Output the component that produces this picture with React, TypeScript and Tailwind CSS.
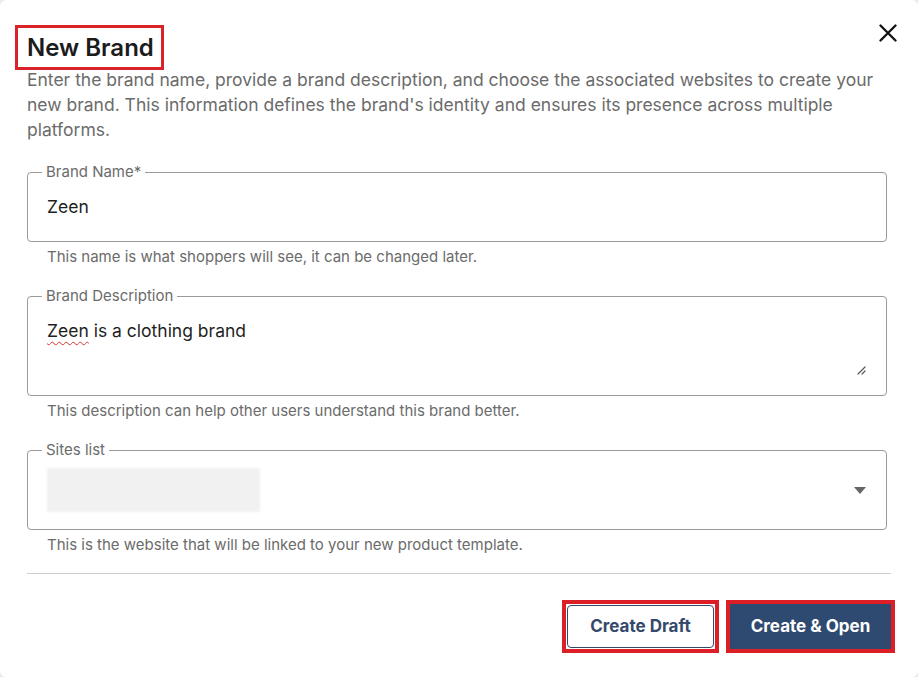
import { type ReactNode } from 'react';

const font = { fontFamily: 'Inter, "Noto Sans", Arial, sans-serif' };

function OutlinedField({ label, children, helper }: { label: string; children: ReactNode; helper: string }) {
  return (
    <div>
      <div className="relative rounded-[4px] border border-[#9a9a9a]">
        <span className="absolute left-[14px] top-[-10px] bg-white px-[4px] text-[15px] leading-[18px] text-[#6b6b6b]">
          {label}
        </span>
        {children}
      </div>
      <p className="mt-[5px] pl-[20px] text-[15px] leading-[20px] text-[#6b6b6b]">{helper}</p>
    </div>
  );
}

export default function App() {
  return (
    <div className="h-[677px] w-[918px] bg-[#e9e9e9]" style={font}>
      <div className="relative flex h-full w-full flex-col rounded-[6px] bg-white px-[27px] pt-[25px]">
        <button className="absolute right-[20px] top-[23px] p-[1px]" aria-label="Close">
          <svg width="18" height="18" viewBox="0 0 18 18" fill="none" stroke="#111" strokeWidth="2.3" strokeLinecap="round">
            <path d="M1.5 1.5L16.5 16.5M16.5 1.5L1.5 16.5" />
          </svg>
        </button>

        <div>
          <h2 className="ml-[-12px] inline-block border-[3px] border-[#d9222a] pl-[9px] pr-[7px] text-[24px] font-semibold leading-[39px] text-[#1c1c1c]">
            New Brand
          </h2>
        </div>
        <p className="mt-[-3px] pr-[10px] text-[17.5px] leading-[25px] text-[#6b6b6b]">
          Enter the brand name, provide a brand description, and choose the associated websites to create your
          new brand. This information defines the brand's identity and ensures its presence across multiple
          platforms.
        </p>

        <div className="mr-[4px] mt-[30px] flex flex-col gap-[29px]">
          <OutlinedField label="Brand Name*" helper="This name is what shoppers will see, it can be changed later.">
            <div className="flex h-[68px] items-center pl-[19px] text-[17.5px] text-[#1f1f1f]">Zeen</div>
          </OutlinedField>

          <OutlinedField
            label="Brand Description"
            helper="This description can help other users understand this brand better."
          >
            <div className="relative h-[98px] pl-[19px] pt-[22px] text-[17.5px] leading-[24px] text-[#1f1f1f]">
              <span className="underline decoration-[#d33] decoration-wavy decoration-[1px] underline-offset-[4px]">
                Zeen
              </span>{' '}
              is a clothing brand
              <svg className="absolute bottom-[20px] right-[20px]" width="10" height="10" viewBox="0 0 10 10">
                <path d="M9 2L2 9M9 6L6 9" stroke="#555" strokeWidth="1.2" strokeLinecap="round" />
              </svg>
            </div>
          </OutlinedField>

          <OutlinedField label="Sites list" helper="This is the website that will be linked to your new product template.">
            <div className="flex h-[78px] items-center justify-between pl-[19px] pr-[20px]">
              <div className="h-[44px] w-[213px] bg-[#f1f1f1] blur-[1px]" />
              <svg width="12" height="7" viewBox="0 0 12 7">
                <path d="M0 0H12L6 7Z" fill="#666" />
              </svg>
            </div>
          </OutlinedField>
        </div>

        <div className="mt-[18px] h-px bg-[#cfcfcf]" />

        <div className="mr-[-4px] mt-[26px] flex justify-end gap-[7px]">
          <div className="border-[4px] border-[#dc1f26] p-[1px]">
            <button className="h-[43px] w-[147px] rounded-[4px] border-[1.5px] border-[#34496b] bg-white text-[17px] font-bold text-[#34496b]">
              Create Draft
            </button>
          </div>
          <div className="border-[4px] border-[#dc1f26]">
            <button className="h-[45px] w-[161px] bg-[#2f4a70] text-[17px] font-bold text-white">
              Create &amp; Open
            </button>
          </div>
        </div>
      </div>
    </div>
  );
}
